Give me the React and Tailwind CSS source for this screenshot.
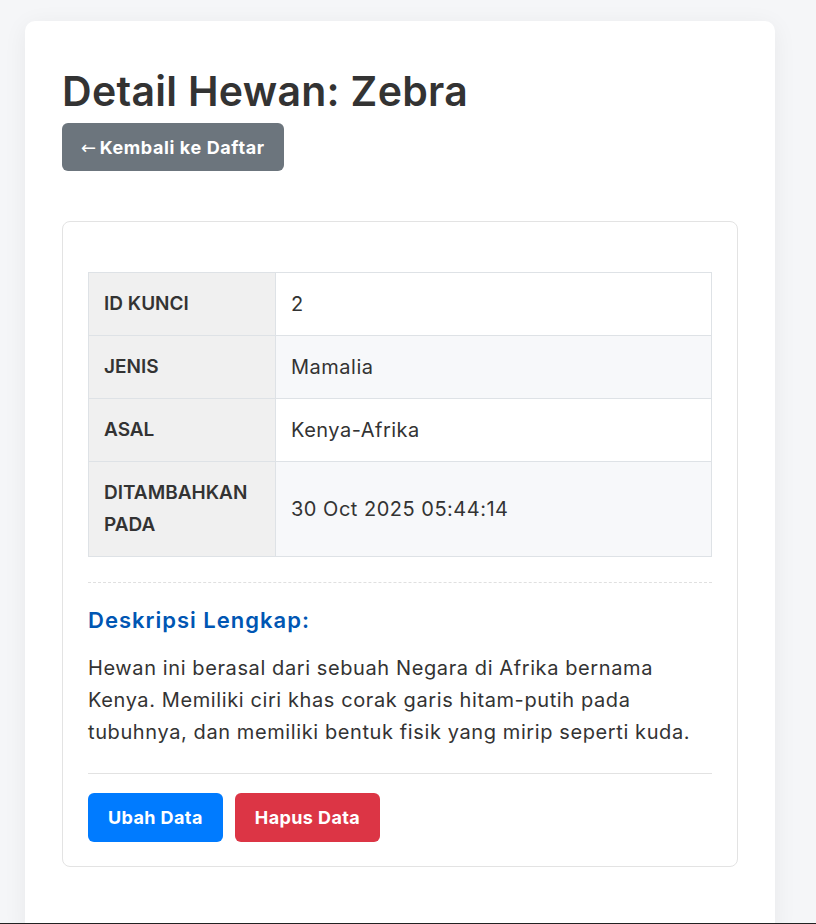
import React from 'react';

const rows = [
  { label: 'ID KUNCI', value: '2' },
  { label: 'JENIS', value: 'Mamalia' },
  { label: 'ASAL', value: 'Kenya-Afrika' },
  { label: 'DITAMBAHKAN PADA', value: '30 Oct 2025 05:44:14' },
];

export default function App() {
  return (
    <div className="min-h-screen bg-[#f5f6f8] pt-[21px] font-['Inter',sans-serif] text-[#333]">
      <div className="ml-[25px] w-[750px] rounded-[10px] bg-white px-[37px] pt-[45px] pb-[70px] shadow-[0_4px_24px_rgba(0,0,0,0.06)]">
        <h1 className="text-[41px] leading-[50px] font-semibold tracking-[0.3px]">Detail Hewan: Zebra</h1>
        <div className="mt-[7px] flex">
          <a
            href="#"
            className="flex h-[48px] items-center gap-[3px] rounded-[6px] bg-[#6c757d] px-[19px] text-[18px] font-bold tracking-[0.6px] text-white"
          >
            <span className="font-['DejaVu_Sans',sans-serif] font-normal">←</span>
            <span>Kembali ke Daftar</span>
          </a>
        </div>

        {/* detail card */}
        <div className="mt-[50px] rounded-[8px] border border-[#e3e3e3] px-[25px] pt-[50px] pb-[24px]">
          <table className="w-full border-collapse">
            <tbody>
              {rows.map((r, i) => (
                <tr key={r.label}>
                  <th className="w-[187px] border border-[#dee2e6] bg-[#f0f0f0] px-[15px] py-[15px] text-left align-middle text-[19px] leading-[32px] font-semibold">
                    {r.label}
                  </th>
                  <td
                    className={
                      'border border-[#dee2e6] px-[15px] py-[15px] align-middle text-[20px] leading-[32px] tracking-[0.5px] ' +
                      (i % 2 === 1 ? 'bg-[#f7f8fa]' : 'bg-white')
                    }
                  >
                    {r.value}
                  </td>
                </tr>
              ))}
            </tbody>
          </table>

          <div className="mt-[25px] border-t border-dashed border-[#e0e0e0]" />

          <h3 className="mt-[24px] text-[22px] leading-[26px] font-semibold tracking-[1px] text-[#0056b3]">
            Deskripsi Lengkap:
          </h3>
          <p className="mt-[19px] text-[20px] leading-[32px] tracking-[0.6px]">
            Hewan ini berasal dari sebuah Negara di Afrika bernama Kenya. Memiliki ciri khas corak garis
            hitam-putih pada tubuhnya, dan memiliki bentuk fisik yang mirip seperti kuda.
          </p>

          <div className="mt-[25px] border-t border-[#e2e2e2]" />

          <div className="mt-[19px] flex gap-[12px]">
            <a href="#" className="flex h-[49px] items-center rounded-[6px] bg-[#007bff] px-[20px] text-[18px] font-bold tracking-[0.4px] text-white">
              Ubah Data
            </a>
            <a href="#" className="flex h-[49px] items-center rounded-[6px] bg-[#dc3545] px-[20px] text-[18px] font-bold tracking-[0.4px] text-white">
              Hapus Data
            </a>
          </div>
        </div>
      </div>
      <div className="fixed bottom-0 left-0 right-0 h-px bg-[#222]" />
    </div>
  );
}
